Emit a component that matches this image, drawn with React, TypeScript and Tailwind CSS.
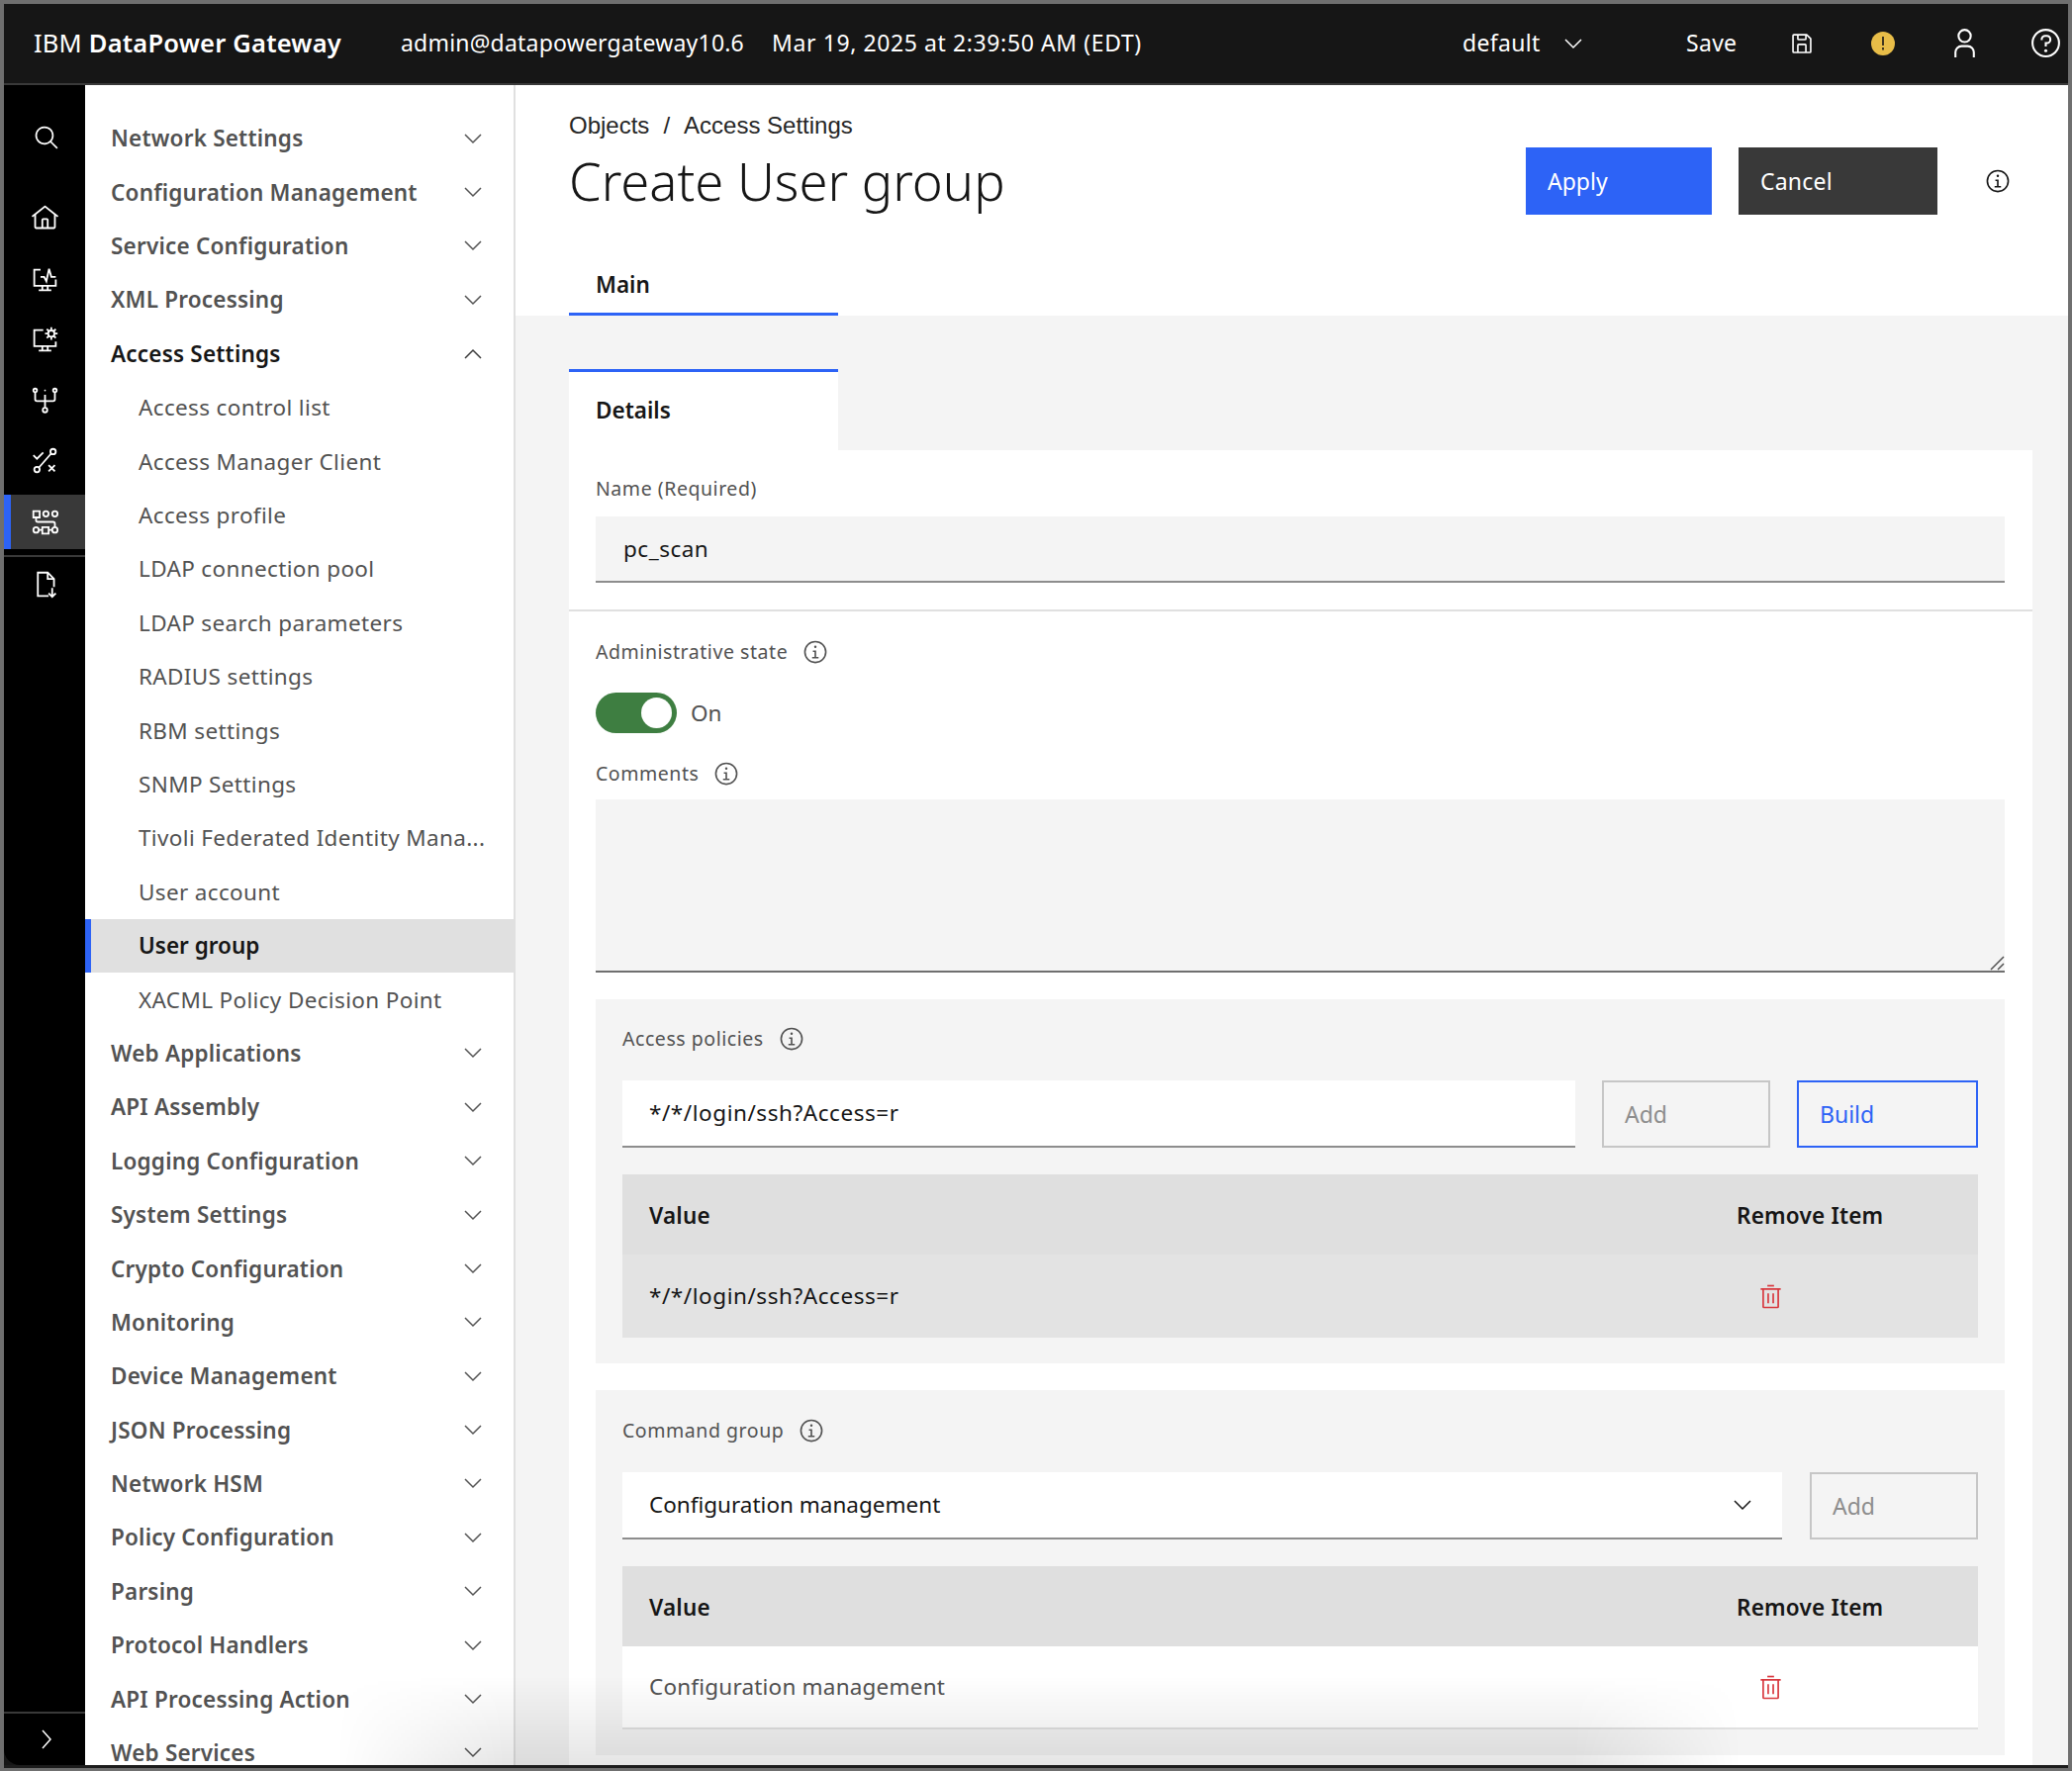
import React from 'react';

const collapsedTop = ['Network Settings', 'Configuration Management', 'Service Configuration', 'XML Processing'];
const accessItems = [
  'Access control list',
  'Access Manager Client',
  'Access profile',
  'LDAP connection pool',
  'LDAP search parameters',
  'RADIUS settings',
  'RBM settings',
  'SNMP Settings',
  'Tivoli Federated Identity Mana...',
  'User account',
  'User group',
  'XACML Policy Decision Point'
];
const collapsedBottom = [
  'Web Applications',
  'API Assembly',
  'Logging Configuration',
  'System Settings',
  'Crypto Configuration',
  'Monitoring',
  'Device Management',
  'JSON Processing',
  'Network HSM',
  'Policy Configuration',
  'Parsing',
  'Protocol Handlers',
  'API Processing Action',
  'Web Services'
];

const Chevron = ({ up = false, className = '' }: { up?: boolean; className?: string }) => (
  <svg width="18" height="11" viewBox="0 0 18 11" fill="none" stroke="currentColor" strokeWidth="1.5" className={className}>
    <polyline points={up ? '1,10 9,2 17,10' : '1,1 9,9 17,1'} />
  </svg>
);

const Info = ({ className = '' }: { className?: string }) => (
  <svg viewBox="0 0 32 32" fill="currentColor" className={className}>
    <path d="M17 22v-8h-4v2h2v6h-3v2h8v-2h-3z" />
    <path d="M16 8a1.5 1.5 0 1 0 1.5 1.5A1.5 1.5 0 0 0 16 8z" />
    <path d="M16 30a14 14 0 1 1 14-14 14 14 0 0 1-14 14zm0-26a12 12 0 1 0 12 12A12 12 0 0 0 16 4z" />
  </svg>
);

const Trash = () => (
  <svg viewBox="0 0 32 32" fill="currentColor" className="w-[27px] h-[27px] text-[#d8393f]">
    <path d="M12 12h2v12h-2z" />
    <path d="M18 12h2v12h-2z" />
    <path d="M4 6v2h2v20a2 2 0 0 0 2 2h16a2 2 0 0 0 2-2V8h2V6zm4 22V8h16v20z" />
    <path d="M12 2h8v2h-8z" />
  </svg>
);

const RailIcon = ({ children }: { children: React.ReactNode }) => (
  <svg viewBox="0 0 32 32" fill="none" stroke="white" strokeWidth="2" className="w-[29px] h-[29px]">
    {children}
  </svg>
);

const Rail = () => (
  <div className="w-[82px] bg-black flex flex-col text-white rounded-bl-[16px] shrink-0">
    <div className="h-[106px] flex items-center justify-center shrink-0 pl-1">
      <svg viewBox="0 0 32 32" fill="white" className="w-[27px] h-[27px]">
        <path d="M29 27.5859l-7.5521-7.5521a11.0177 11.0177 0 1 0-1.4141 1.4141L27.5859 29ZM4 13a9 9 0 1 1 9 9A9.01 9.01 0 0 1 4 13Z" />
      </svg>
    </div>
    <div className="flex flex-col gap-[6.5px]">
      <div className="h-[55px] flex items-center justify-center pt-[2px]">
        <svg viewBox="0 0 32 32" fill="white" className="w-[29px] h-[29px]">
          <path d="M16.6123,2.2138a1.01,1.01,0,0,0-1.2427,0L1,13.4194l1.2427,1.5717L4,13.6209V26a2.0041,2.0041,0,0,0,2,2H26a2.0037,2.0037,0,0,0,2-2V13.63L29.7573,15,31,13.4282ZM18,26H14V18h4Zm2,0V18a2.0023,2.0023,0,0,0-2-2H14a2.002,2.002,0,0,0-2,2v8H6V12.0615l10-7.79,10,7.8005V26Z" />
        </svg>
      </div>
      <div className="h-[55px] flex items-center justify-center pt-[2px]">
        <RailIcon>
          <path d="M11 5H4v18h24v-7" />
          <path d="M13 23v5M19 23v5M9 28h14" />
          <path d="M11 13h4l2.5 5 3-14 2.5 9h5" />
        </RailIcon>
      </div>
      <div className="h-[55px] flex items-center justify-center pt-[2px]">
        <RailIcon>
          <path d="M14 5H4v18h24v-5" />
          <path d="M13 23v5M19 23v5M9 28h14" />
          <circle cx="23" cy="9" r="3.5" />
          <path d="M23 2v3M23 13v3M16 9h3M27 9h3M18 4l2.5 2.5M25.5 11.5L28 14M28 4l-2.5 2.5M20.5 11.5L18 14" />
        </RailIcon>
      </div>
      <div className="h-[55px] flex items-center justify-center">
        <RailIcon>
          <circle cx="5" cy="5" r="2" />
          <circle cx="27" cy="5" r="2" />
          <circle cx="16" cy="5" r="1" fill="white" stroke="none" />
          <circle cx="16" cy="27" r="2.5" />
          <path d="M5 7v8a2 2 0 0 0 2 2h18a2 2 0 0 0 2-2V7M16 10v14" />
        </RailIcon>
      </div>
      <div className="h-[55px] flex items-center justify-center">
        <RailIcon>
          <circle cx="7" cy="26" r="3" />
          <circle cx="25" cy="6" r="3" />
          <path d="M9 24L23 8M3 10l4 4 7-7M20 21l7 7M27 21l-7 7" />
        </RailIcon>
      </div>
      <div className="h-[55px] flex items-center justify-center bg-[#393939] border-l-[7px] border-[#2d63f6] pr-[7px]">
        <RailIcon>
          <path d="M3 4h7v7H3zM13 22h7v7h-7z" />
          <circle cx="17" cy="7" r="3" />
          <circle cx="27" cy="7" r="3" />
          <circle cx="6" cy="25" r="3" />
          <circle cx="27" cy="25" r="3" />
          <path d="M6 11v3a2 2 0 0 0 2 2h17a2 2 0 0 1 2 2v4M9 25h4M20 25h4" />
        </RailIcon>
      </div>
    </div>
    <div className="h-[2px] bg-[#393939] mt-[6px] shrink-0" />
    <div className="h-[55px] flex items-center justify-center">
      <RailIcon>
        <path d="M20 29H8V3h11l7 7v9" />
        <path d="M19 3v7h7" />
        <path d="M24 20v10M20 26l4 4 4-4" />
      </RailIcon>
    </div>
    <div className="mt-auto h-[54px] border-t-2 border-[#393939] flex items-center justify-center shrink-0 pl-[3px]">
      <svg width="12" height="20" viewBox="0 0 12 20" fill="none" stroke="white" strokeWidth="1.5">
        <polyline points="2,1 10,10 2,19" />
      </svg>
    </div>
  </div>
);

const NavHead = ({ label, open = false }: { label: string; open?: boolean }) => (
  <div className={`h-[54.4px] shrink-0 flex items-center justify-between pl-[26px] pr-[32px] text-[22.5px] tracking-[0.2px] font-semibold ${open ? 'text-[#161616]' : 'text-[#525252]'}`}>
    <span>{label}</span>
    <Chevron up={open} className={open ? 'text-[#393939]' : 'text-[#525252]'} />
  </div>
);

const Sidebar = () => (
  <div className="w-[435px] shrink-0 bg-white border-r-2 border-[#e0e0e0] flex flex-col pt-[27px] overflow-hidden">
    {collapsedTop.map((label) => (
      <NavHead key={label} label={label} />
    ))}
    <NavHead label="Access Settings" open />
    {accessItems.map((label) =>
      label === 'User group' ? (
        <div key={label} className="h-[54.4px] shrink-0 flex items-center bg-[#e0e0e0] border-l-[6px] border-[#2d63f6] pl-[48px] text-[22.5px] font-semibold text-[#161616]">
          {label}
        </div>
      ) : (
        <div key={label} className="h-[54.4px] shrink-0 flex items-center pl-[54px] text-[22.5px] tracking-[0.35px] text-[#525252] whitespace-nowrap">
          {label}
        </div>
      )
    )}
    {collapsedBottom.map((label) => (
      <NavHead key={label} label={label} />
    ))}
  </div>
);

const Label = ({ text, info = true }: { text: string; info?: boolean }) => (
  <div className="flex items-center gap-[15px] text-[19.5px] tracking-[0.55px] text-[#525252] leading-[26px]">
    <span>{text}</span>
    {info && <Info className="w-[26px] h-[26px]" />}
  </div>
);

const Disabled = ({ className = '' }: { className?: string }) => (
  <div className={`h-[68px] border-2 border-[#c6c6c6] flex items-center pl-[21px] text-[23px] text-[#8d8d8d] ${className}`}>Add</div>
);

const ValueTable = ({ value, white = false }: { value: string; white?: boolean }) => (
  <div className="ml-[27px] mr-[27px] mt-[27px] text-[22.5px] tracking-[0.2px]">
    <div className="h-[81px] bg-[#dfdfdf] flex items-center pl-[27px] pt-[2px] font-semibold text-[#161616]">
      <span className="flex-1">Value</span>
      <span className="w-[244px]">Remove Item</span>
    </div>
    <div className={`flex items-center pl-[27px] ${white ? 'h-[84px] bg-white text-[#525252] border-b-2 border-[#e0e0e0]' : 'h-[84px] bg-[#e3e3e3] text-[#161616]'}`}>
      <span className={`flex-1 ${white ? '' : 'tracking-[0.55px]'}`}>{value}</span>
      <span className="w-[244px] pl-[21px]">
        <Trash />
      </span>
    </div>
  </div>
);

const DetailsForm = () => (
  <div className="ml-[54px] mr-[36px] bg-white pb-[40px]">
    <div className="pl-[27px] pr-[28px] pt-[26px] pb-[27px] border-b-2 border-[#e0e0e0]">
      <Label text="Name (Required)" info={false} />
      <div className="mt-[15px] h-[67px] bg-[#f4f4f4] border-b-2 border-[#8d8d8d] flex items-center pl-[28px] text-[22.5px] tracking-[0.5px] text-[#161616]">pc_scan</div>
    </div>
    <div className="pl-[27px] pr-[28px] pt-[28px]">
      <Label text="Administrative state" />
      <div className="mt-[28px] flex items-center gap-[14px]">
        <div className="w-[82px] h-[41px] rounded-full bg-[#3e7e41] flex items-center justify-end pr-[5px]">
          <div className="w-[31px] h-[31px] rounded-full bg-white" />
        </div>
        <span className="text-[22.5px] text-[#525252]">On</span>
      </div>
      <div className="mt-[28px]">
        <Label text="Comments" />
      </div>
      <div className="relative mt-[13px] h-[175px] bg-[#f4f4f4] border-b-2 border-[#6f6f6f]">
        <svg width="16" height="16" viewBox="0 0 16 16" fill="none" stroke="#525252" strokeWidth="1.5" className="absolute right-0 bottom-0">
          <path d="M15 2L2 15M15 9l-6 6" />
        </svg>
      </div>
    </div>
    <div className="ml-[27px] mr-[28px] mt-[27px] h-[368px] bg-[#f4f4f4] pt-[27px]">
      <div className="px-[27px]">
        <Label text="Access policies" />
      </div>
      <div className="mx-[27px] mt-[29px] flex gap-[27px]">
        <div className="flex-1 h-[68px] bg-white border-b-2 border-[#8d8d8d] flex items-center pl-[27px] text-[22.5px] tracking-[0.55px] text-[#161616]">*/*/login/ssh?Access=r</div>
        <Disabled className="w-[170px]" />
        <div className="w-[183px] h-[68px] border-2 border-[#2d63f6] flex items-center pl-[21px] text-[23px] text-[#2d63f6]">Build</div>
      </div>
      <ValueTable value="*/*/login/ssh?Access=r" />
    </div>
    <div className="ml-[27px] mr-[28px] mt-[27px] h-[369px] bg-[#f4f4f4] pt-[28px]">
      <div className="px-[27px]">
        <Label text="Command group" />
      </div>
      <div className="mx-[27px] mt-[29px] flex gap-[28px]">
        <div className="flex-1 h-[68px] bg-white border-b-2 border-[#8d8d8d] flex items-center justify-between pl-[27px] pr-[31px] text-[22.5px] text-[#161616]">
          <span>Configuration management</span>
          <Chevron />
        </div>
        <Disabled className="w-[170px]" />
      </div>
      <ValueTable value="Configuration management" white />
    </div>
  </div>
);

const App = () => (
  <div className="relative w-[2094px] h-[1790px] overflow-hidden bg-[#6f6f6f] pt-[4px] pl-[4px] pr-[4px] pb-[3px] font-['Noto_Sans',sans-serif]">
    <div className="h-full flex flex-col bg-[#161616] border-b-[3px] border-[#1c1c1c] overflow-hidden">
      <header className="h-[82px] shrink-0 bg-[#161616] border-b-2 border-[#393939] flex items-center text-white text-[23px] pl-[30px] pb-[1px]">
        <span className="w-[371px] text-[25.5px] tracking-[0.2px]">
          IBM <span className="font-semibold">DataPower Gateway</span>
        </span>
        <span className="w-[375px] tracking-[0.2px]">admin@datapowergateway10.6</span>
        <span className="w-[698px] tracking-[0.6px]">Mar 19, 2025 at 2:39:50 AM (EDT)</span>
        <span className="w-[226px] flex items-center gap-[25px] tracking-[0.3px]">
          default
          <Chevron className="mt-[2px]" />
        </span>
        <span className="w-[104px] tracking-[0.3px]">Save</span>
        <svg viewBox="0 0 32 32" fill="white" className="w-[26px] h-[26px] mr-[57px]">
          <path d="M27.71,9.29l-5-5A1,1,0,0,0,22,4H6A2,2,0,0,0,4,6V26a2,2,0,0,0,2,2H26a2,2,0,0,0,2-2V10A1,1,0,0,0,27.71,9.29ZM12,6h8v4H12Zm8,20H12V18h8Zm2,0V18a2,2,0,0,0-2-2H12a2,2,0,0,0-2,2v8H6V6h4v4a2,2,0,0,0,2,2h8a2,2,0,0,0,2-2V6.41l4,4V26Z" />
        </svg>
        <span className="w-[24px] h-[24px] rounded-full bg-[#e8bd48] flex items-center justify-center mr-[54px]">
          <svg width="4" height="14" viewBox="0 0 4 14" fill="#161616">
            <path d="M1.2 0h1.6v9H1.2zM1.2 11h1.6v2.4H1.2z" />
          </svg>
        </span>
        <svg viewBox="0 0 32 32" fill="white" className="w-[33px] h-[33px] mr-[49px]">
          <path d="M16,4a5,5,0,1,1-5,5,5,5,0,0,1,5-5m0-2a7,7,0,1,0,7,7A7,7,0,0,0,16,2Z" />
          <path d="M26,30H24V25a5,5,0,0,0-5-5H13a5,5,0,0,0-5,5v5H6V25a7,7,0,0,1,7-7h6a7,7,0,0,1,7,7Z" />
        </svg>
        <svg viewBox="0 0 32 32" fill="white" className="w-[33px] h-[33px]">
          <path d="M16,2A14,14,0,1,0,30,16,14,14,0,0,0,16,2Zm0,26A12,12,0,1,1,28,16,12,12,0,0,1,16,28Z" />
          <circle cx="16" cy="23.5" r="1.5" />
          <path d="M17,8H15.5A4.49,4.49,0,0,0,11,12.5V13h2v-.5A2.5,2.5,0,0,1,15.5,10H17a2.5,2.5,0,0,1,0,5H15v4.5h2V17a4.5,4.5,0,0,0,0-9Z" />
        </svg>
      </header>
      <div className="flex-1 flex min-h-0">
        <Rail />
        <Sidebar />
        <main className="flex-1 bg-[#f4f4f4] flex flex-col min-w-0 overflow-hidden">
          <div className="h-[233px] shrink-0 bg-white pl-[54px] flex flex-col">
            <div className="flex">
              <div className="flex-1">
                <div className="mt-[27px] text-[24px] text-[#262626] flex gap-[14px] h-[28px] items-center font-['Liberation_Sans',sans-serif]">
                  <span>Objects</span>
                  <span>/</span>
                  <span>Access Settings</span>
                </div>
                <h1 className="mt-[10px] text-[52.5px] font-light leading-[64px] text-[#161616]">Create User group</h1>
              </div>
              <div className="flex items-start gap-[27px] pt-[63px] pr-[58px]">
                <div className="w-[188px] h-[68px] bg-[#2d63f6] flex items-center pl-[22px] text-[23px] text-white">Apply</div>
                <div className="w-[201px] h-[68px] bg-[#393939] flex items-center pl-[22px] text-[23px] tracking-[0.2px] text-white">Cancel</div>
                <Info className="w-[26px] h-[26px] ml-[21px] mt-[21px] text-[#161616]" />
              </div>
            </div>
            <div className="mt-auto w-[272px] h-[74px] border-b-[3px] border-[#2d63f6] pl-[27px] pt-[14px] flex items-center text-[22.5px] font-semibold text-[#161616]">Main</div>
          </div>
          <div className="h-[54px] shrink-0" />
          <div className="ml-[54px] w-[272px] h-[82px] shrink-0 bg-white border-t-[3px] border-[#2d63f6] pl-[27px] pb-[2px] flex items-center text-[22.5px] font-semibold text-[#161616]">Details</div>
          <DetailsForm />
        </main>
      </div>
    </div>
    <div className="absolute left-[340px] w-[1420px] bottom-[6px] h-[90px] pointer-events-none bg-gradient-to-t from-black/10 to-transparent [mask-image:linear-gradient(to_right,transparent,black_12%,black_88%,transparent)]" />
  </div>
);

export default App;
